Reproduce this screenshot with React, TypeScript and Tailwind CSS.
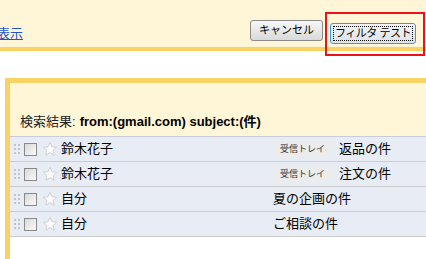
import React from "react";

type Row = { from: string; label?: string; subject: string };

const ROWS: Row[] = [
  { from: "鈴木花子", label: "受信トレイ", subject: "返品の件" },
  { from: "鈴木花子", label: "受信トレイ", subject: "注文の件" },
  { from: "自分", subject: "夏の企画の件" },
  { from: "自分", subject: "ご相談の件" },
];

function Grip() {
  return (
    <svg width="6" height="10" viewBox="0 0 6 10" className="shrink-0">
      {[0, 4, 8].map((y) => (
        <g key={y} fill="#c4c4c4">
          <rect x="0" y={y} width="2" height="2" />
          <rect x="4" y={y} width="2" height="2" />
        </g>
      ))}
    </svg>
  );
}

function Star() {
  return (
    <svg width="16" height="16" viewBox="0 0 24 24" className="shrink-0">
      <path
        d="M12 2l3 6.6 7.1.7-5.4 4.8 1.6 7.1L12 17.5l-6.3 3.7 1.6-7.1-5.4-4.8 7.1-.7z"
        fill="#fbfbfb"
        stroke="#cdcdcd"
        strokeWidth="1.4"
        strokeLinejoin="round"
      />
    </svg>
  );
}

function MailRow({ row }: { row: Row }) {
  return (
    <div className="h-[25px] border-b border-[#cccccc] bg-[#e8ecf4] flex items-center">
      <div className="ml-[4px] w-[6px] flex items-center">
        <Grip />
      </div>
      <div className="ml-[4px] w-[13px] h-[13px] border border-[#8a8a8a] bg-gradient-to-br from-[#d8d8d8] to-[#fbfbfb] shrink-0" />
      <div className="ml-[5px]">
        <Star />
      </div>
      <div className="ml-[3px] w-[212px] text-[13px] text-black">{row.from}</div>
      {row.label ? (
        <>
          <span className="h-[15px] w-[59px] bg-[#ececec] text-[9px] text-[#333] flex items-center justify-center leading-none">
            {row.label}
          </span>
          <span className="ml-[7px] text-[13px] text-black">{row.subject}</span>
        </>
      ) : (
        <span className="text-[13px] text-black">{row.subject}</span>
      )}
    </div>
  );
}

export default function App() {
  return (
    <div
      className="w-[426px] h-[259px] overflow-hidden bg-white flex flex-col"
      style={{ fontFamily: '"Liberation Sans", "Noto Sans CJK JP", sans-serif' }}
    >
      {/* top bar */}
      <div className="h-[47px] bg-[#fff6d8] flex items-start pt-[20px] shrink-0">
        <a className="-ml-[3px] mt-[6px] text-[13px] leading-[15px] text-[#2255cc] underline">表示</a>
        <div className="flex-1" />
        <button className="w-[73px] h-[21px] rounded-[3px] border border-[#8a8a8a] bg-gradient-to-b from-[#f7f7f7] to-[#d9d9d9] text-[11px] text-black leading-none whitespace-nowrap">
          キャンセル
        </button>
        <div className="relative ml-[7px] mr-[10px]">
          <button className="w-[86px] h-[21px] rounded-[3px] border border-[#3c9bd6] bg-gradient-to-b from-[#f2f4f6] to-[#dde3e8] text-[11px] text-black leading-none p-[2px]">
            <span className="flex h-full w-full items-center justify-center border border-dotted border-black whitespace-nowrap tracking-[-0.5px]">
              フィルタ テスト
            </span>
          </button>
          <div className="absolute -left-[5px] -right-[9px] -top-[8px] -bottom-[12px] border-2 border-[#e8131b]" />
        </div>
      </div>
      <div className="h-[4px] bg-[#fad163] shrink-0" />
      <div className="h-[27px] shrink-0" />

      {/* results box */}
      <div className="ml-[5px] flex-1 border-l-[5px] border-t-[5px] border-[#fad163] flex flex-col">
        <div className="h-[53px] bg-[#fff6d8] flex items-end pb-[5px] pl-[10px] text-[13px] text-[#222]">
          <span>検索結果:</span>
          <span className="ml-[4px] font-bold text-black">from:(gmail.com) subject:(件)</span>
        </div>
        <div className="border-t border-[#c9cdd8]">
          {ROWS.map((r, i) => (
            <MailRow key={i} row={r} />
          ))}
        </div>
      </div>
    </div>
  );
}
